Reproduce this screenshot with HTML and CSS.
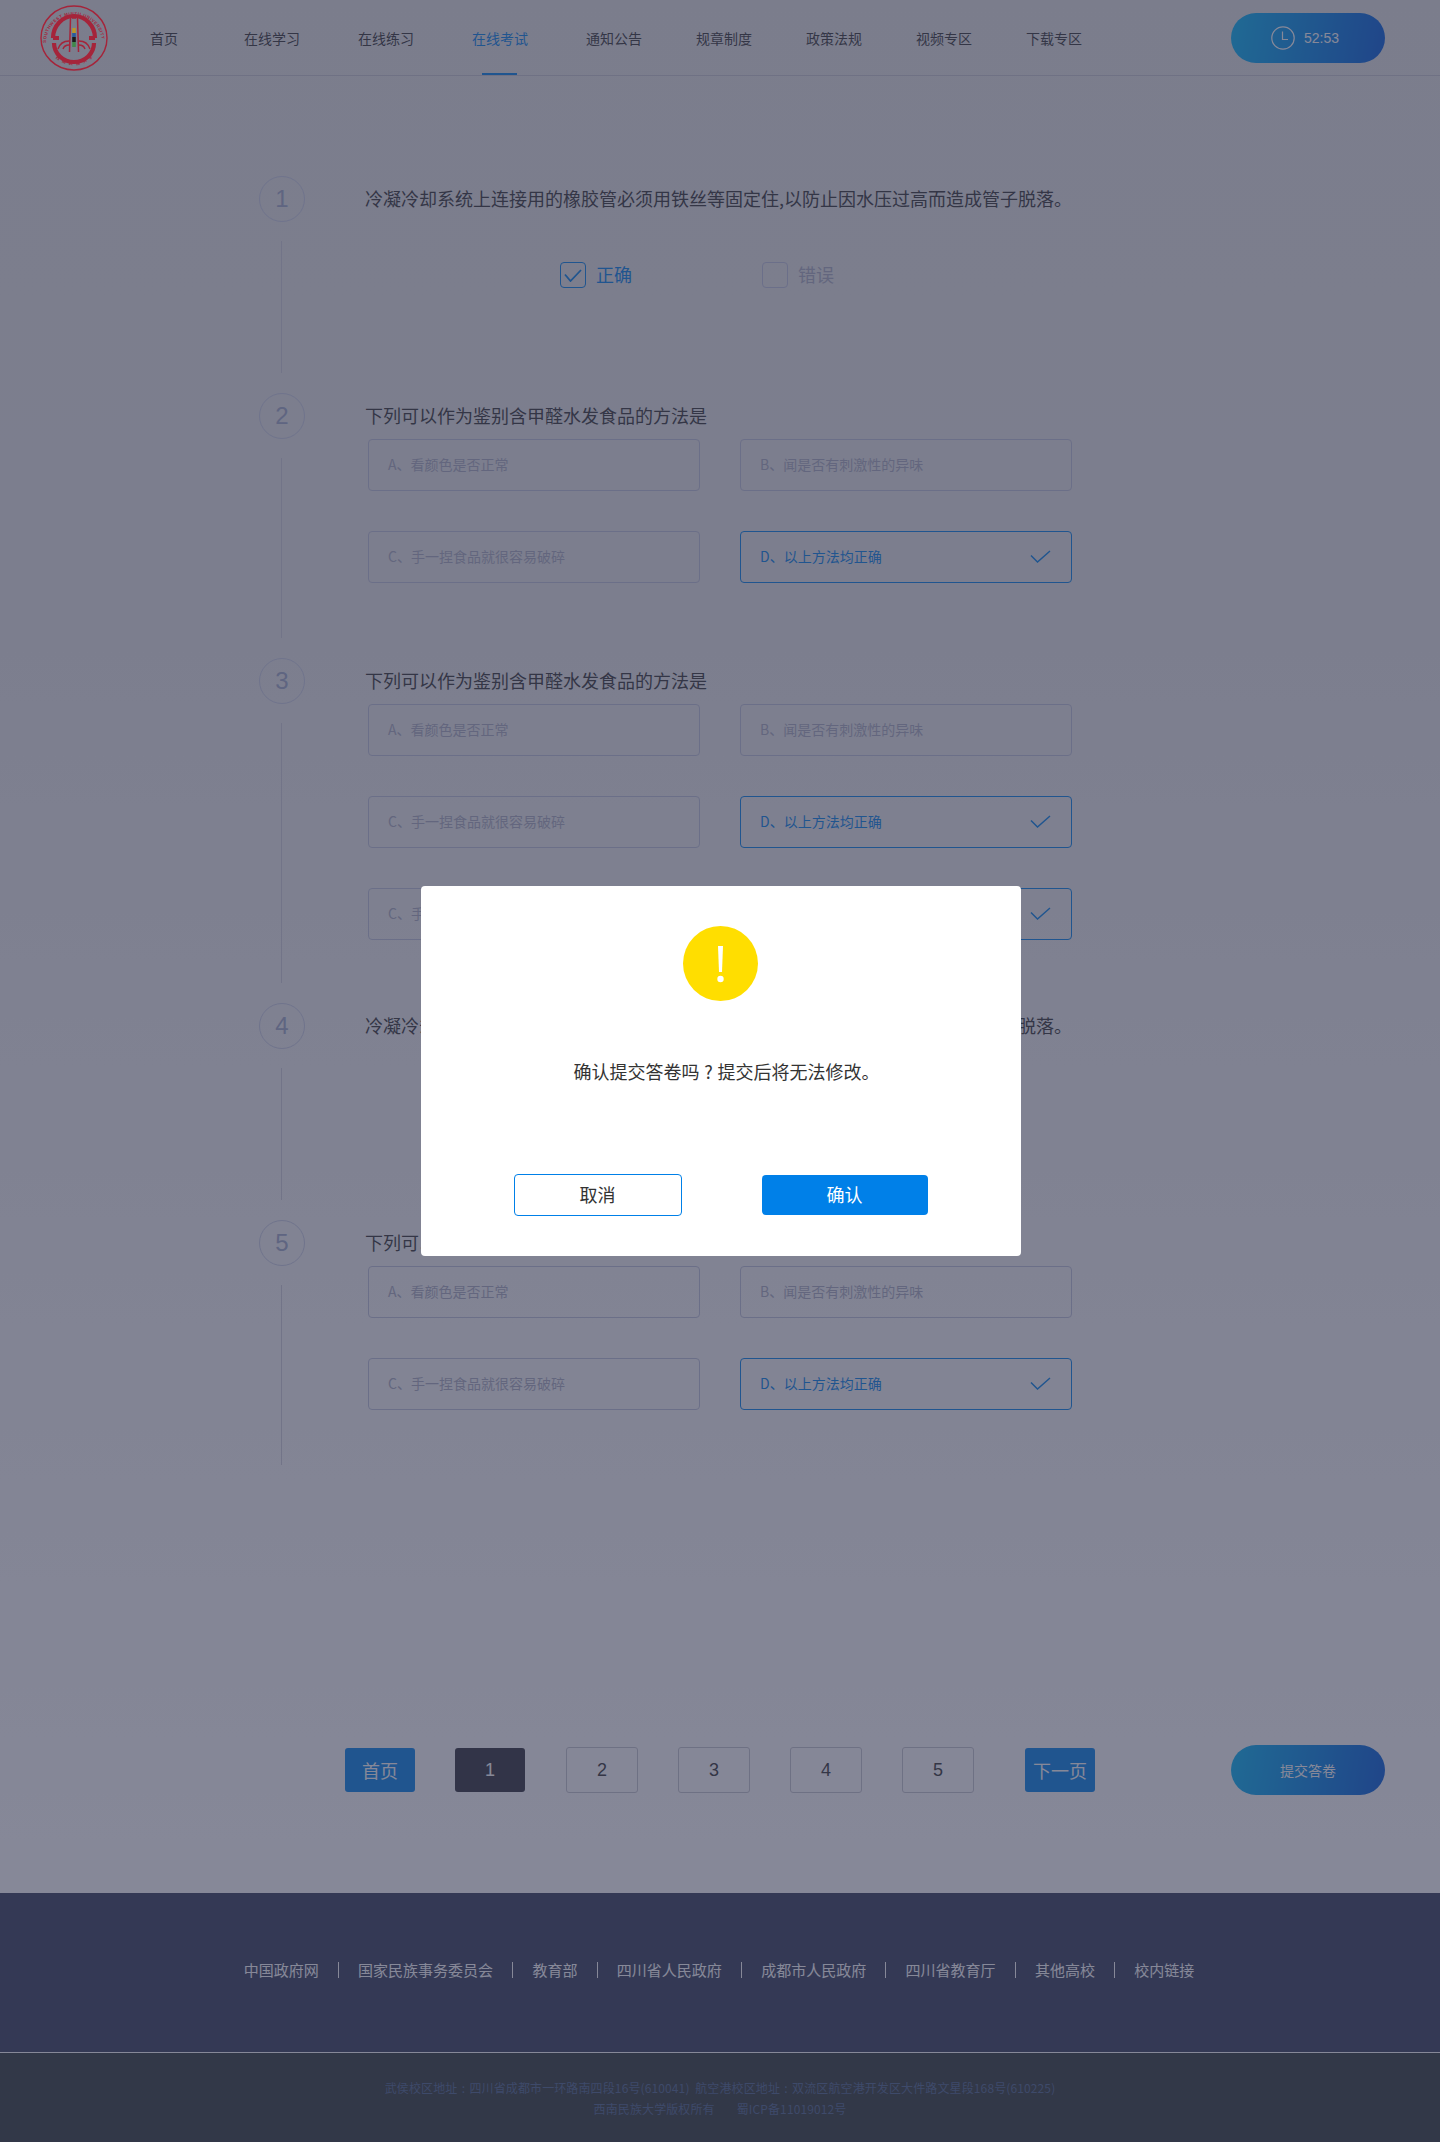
FILE: index.html
```html
<!DOCTYPE html>
<html lang="zh-CN">
<head>
  <meta charset="UTF-8" />
  <title>在线考试</title>
  <link rel="stylesheet" href="styles.css">
</head>
<body>
  <div class="page">
    <header class="header">
      <svg class="logo" width="68" height="66" viewBox="0 0 68 66">
        <defs>
          <path id="logo-top" d="M6 38 A28 28 0 0 1 62 38" />
          <path id="logo-bottom" d="M13 50 A27 27 0 0 0 55 50" />
        </defs>
        <ellipse cx="34" cy="33" rx="33" ry="32" fill="none" stroke="#a5243a" stroke-width="1.4" />
        <text class="logo-text" font-size="4.4"><textPath href="#logo-top" textLength="84">SOUTHWEST MINZU UNIVERSITY</textPath></text>
        <text class="logo-text" font-size="4.2" letter-spacing="3.2"><textPath href="#logo-bottom" startOffset="4">西南民族大学</textPath></text>
        <path d="M13 33 A21 22 0 0 1 55 33 M19 33 H13 M49 33 H55" fill="none" stroke="#a5243a" stroke-width="4.2" />
        <path d="M14 38 A20 19 0 0 0 54 38" fill="none" stroke="#a5243a" stroke-width="4.2" />
        <path d="M30.5 13 L29.5 47 M37.5 13 L38.5 47 M32 13 H36" stroke="#a5243a" stroke-width="1.5" fill="none" />
        <rect x="32.2" y="23" width="3.6" height="5" fill="#b8962b" />
        <rect x="32.2" y="28" width="3.6" height="4" fill="#2b5c9e" />
        <rect x="32.2" y="32" width="3.6" height="5" fill="#1b1b1b" />
        <rect x="32.2" y="37" width="3.6" height="5" fill="#3f8a4a" />
        <path d="M18 44 C20 38 25 36 29 36 M50 44 C48 38 43 36 39 36 M23 44 C24 41 27 40 29 40 M45 44 C44 41 41 40 39 40" fill="none" stroke="#a5243a" stroke-width="1.4" />
      </svg>
      <nav class="nav">
        <a class="nav-item nav-item-first">首页</a>
        <a class="nav-item nav-item-wide">在线学习</a>
        <a class="nav-item nav-item-wide">在线练习</a>
        <a class="nav-item nav-item-wide active">在线考试</a>
        <a class="nav-item">通知公告</a>
        <a class="nav-item">规章制度</a>
        <a class="nav-item">政策法规</a>
        <a class="nav-item">视频专区</a>
        <a class="nav-item">下载专区</a>
      </nav>
      <div class="timer">
        <svg width="24" height="24" viewBox="0 0 24 24" fill="none" stroke="#fff" stroke-width="1.2">
          <circle cx="12" cy="12" r="11.2" />
          <path d="M11.5 5.5 V13.5 H17" />
        </svg>
        <span>52:53</span>
      </div>
    </header>

    <main class="questions">
      <section class="question question-short">
        <div class="q-side"><div class="q-num">1</div><div class="q-line"></div></div>
        <div class="q-body">
          <h3 class="q-title">冷凝冷却系统上连接用的橡胶管必须用铁丝等固定住,以防止因水压过高而造成管子脱落。</h3>
          <div class="judge">
            <div class="judge-item selected">
              <span class="judge-box"><svg width="18" height="13" viewBox="0 0 18 13" fill="none"><path d="M1 5.5 L6.5 12 L17 1" /></svg></span><span class="judge-label">正确</span>
            </div>
            <div class="judge-item"><span class="judge-box"></span><span class="judge-label">错误</span></div>
          </div>
        </div>
      </section>

      <section class="question question-two">
        <div class="q-side"><div class="q-num">2</div><div class="q-line"></div></div>
        <div class="q-body">
          <h3 class="q-title">下列可以作为鉴别含甲醛水发食品的方法是</h3>
          <div class="options">
            <div class="option">A、看颜色是否正常</div>
            <div class="option">B、闻是否有刺激性的异味</div>
            <div class="option">C、手一捏食品就很容易破碎</div>
            <div class="option selected">D、以上方法均正确<svg class="option-check" width="21" height="13" viewBox="0 0 21 13" fill="none"><path d="M1 5.5 L7.5 12 L20 1" /></svg></div>
          </div>
        </div>
      </section>

      <section class="question question-three">
        <div class="q-side"><div class="q-num">3</div><div class="q-line"></div></div>
        <div class="q-body">
          <h3 class="q-title">下列可以作为鉴别含甲醛水发食品的方法是</h3>
          <div class="options">
            <div class="option">A、看颜色是否正常</div>
            <div class="option">B、闻是否有刺激性的异味</div>
            <div class="option">C、手一捏食品就很容易破碎</div>
            <div class="option selected">D、以上方法均正确<svg class="option-check" width="21" height="13" viewBox="0 0 21 13" fill="none"><path d="M1 5.5 L7.5 12 L20 1" /></svg></div>
            <div class="option">C、手一捏食品就很容易破碎</div>
            <div class="option selected">D、以上方法均正确<svg class="option-check" width="21" height="13" viewBox="0 0 21 13" fill="none"><path d="M1 5.5 L7.5 12 L20 1" /></svg></div>
          </div>
        </div>
      </section>

      <section class="question question-short">
        <div class="q-side"><div class="q-num">4</div><div class="q-line"></div></div>
        <div class="q-body">
          <h3 class="q-title">冷凝冷却系统上连接用的橡胶管必须用铁丝等固定住,以防止因水压过高而造成管子脱落。</h3>
          <div class="judge">
            <div class="judge-item selected">
              <span class="judge-box"><svg width="18" height="13" viewBox="0 0 18 13" fill="none"><path d="M1 5.5 L6.5 12 L17 1" /></svg></span><span class="judge-label">正确</span>
            </div>
            <div class="judge-item"><span class="judge-box"></span><span class="judge-label">错误</span></div>
          </div>
        </div>
      </section>

      <section class="question question-two">
        <div class="q-side"><div class="q-num">5</div><div class="q-line"></div></div>
        <div class="q-body">
          <h3 class="q-title">下列可以作为鉴别含甲醛水发食品的方法是</h3>
          <div class="options">
            <div class="option">A、看颜色是否正常</div>
            <div class="option">B、闻是否有刺激性的异味</div>
            <div class="option">C、手一捏食品就很容易破碎</div>
            <div class="option selected">D、以上方法均正确<svg class="option-check" width="21" height="13" viewBox="0 0 21 13" fill="none"><path d="M1 5.5 L7.5 12 L20 1" /></svg></div>
          </div>
        </div>
      </section>
    </main>

    <div class="pager">
      <a class="page-btn">首页</a>
      <a class="page-num current">1</a>
      <a class="page-num">2</a>
      <a class="page-num">3</a>
      <a class="page-num">4</a>
      <a class="page-num">5</a>
      <a class="page-btn page-next">下一页</a>
      <a class="submit">提交答卷</a>
    </div>

    <footer class="footer">
      <div class="footer-links">
        <a>中国政府网</a><i></i>
        <a>国家民族事务委员会</a><i></i>
        <a>教育部</a><i></i>
        <a>四川省人民政府</a><i></i>
        <a>成都市人民政府</a><i></i>
        <a>四川省教育厅</a><i></i>
        <a>其他高校</a><i></i>
        <a>校内链接</a>
      </div>
      <div class="footer-info">
        <p>武侯校区地址<span class="mid-mark">:</span>四川省成都市一环路南四段16号(610041) &nbsp;航空港校区地址<span class="mid-mark">:</span>双流区航空港开发区大件路文星段168号(610225)</p>
        <p>西南民族大学版权所有<span class="icp">蜀ICP备11019012号</span></p>
      </div>
    </footer>

    <div class="mask"></div>

    <div class="modal">
      <svg class="modal-icon" width="75" height="75" viewBox="0 0 75 75">
        <circle cx="37.5" cy="37.5" r="37.5" fill="#ffde00" />
        <path d="M35 20 H40 L39 46 H36 Z" fill="#fff" />
        <circle cx="37.5" cy="53" r="3.2" fill="#fff" />
      </svg>
      <p class="modal-text">确认提交答卷吗<span class="mid-mark">?</span>提交后将无法修改。</p>
      <div class="modal-btns">
        <button class="btn-cancel">取消</button>
        <button class="btn-ok">确认</button>
      </div>
    </div>
  </div>
</body>
</html>
```

FILE: styles.css
```css
* {
  box-sizing: border-box;
}

body {
  margin: 0;
  font-family: "Noto Sans CJK JP", "Noto Sans CJK SC", sans-serif;
  color: #333;
}

.page {
  position: relative;
  width: 1440px;
  height: 2142px;
  overflow: hidden;
  background: linear-gradient(#e4e4e2 0, #e6e6e6 600px, #fff 1893px);
}

/* header */
.header {
  display: flex;
  align-items: flex-start;
  height: 76px;
  padding: 5px 55px 0 40px;
  border-bottom: 1px solid #c6c6cc;
}

.logo {
  position: relative;
  z-index: 5;
  flex-shrink: 0;
}

.logo-text {
  fill: #a5243a;
  font-family: "Liberation Sans", "Noto Sans CJK SC", sans-serif;
  font-weight: bold;
}

.nav {
  display: flex;
  margin: -5px 0 0 42px;
}

.nav-item {
  position: relative;
  display: block;
  width: 110px;
  height: 75px;
  font-size: 14px;
  line-height: 76px;
}

.nav-item-first {
  width: 94px;
}

.nav-item-wide {
  width: 114px;
}

.nav-item.active {
  color: #0080e8;
}

.nav-item.active::after {
  content: "";
  position: absolute;
  left: 10px;
  bottom: 0;
  width: 35px;
  height: 2px;
  background: #0080e8;
}

.timer {
  display: flex;
  align-items: center;
  gap: 9px;
  width: 154px;
  height: 50px;
  margin: 8px 0 0 auto;
  padding-left: 40px;
  border-radius: 25px;
  background: linear-gradient(100deg, #00b4f5, #0058d8);
  color: #fff;
  font-family: "Liberation Sans", sans-serif;
  font-size: 14px;
}

/* questions */
.questions {
  padding: 100px 0 0 259px;
}

.question {
  display: flex;
}

.question-short {
  height: 217px;
}

.question-two {
  height: 265px;
}

.question-three {
  height: 345px;
}

.q-side {
  display: flex;
  flex-direction: column;
  align-items: center;
  width: 46px;
  padding-bottom: 20px;
}

.q-num {
  flex-shrink: 0;
  width: 46px;
  height: 46px;
  border: 1px solid #c6cbe0;
  border-radius: 50%;
  color: #9da7c5;
  font-family: "Liberation Sans", sans-serif;
  font-size: 24px;
  line-height: 44px;
  text-align: center;
}

.q-line {
  flex: 1;
  width: 1px;
  margin: 19px 1px 0 0;
  background: #ccced6;
}

.q-body {
  margin-left: 60px;
}

.q-title {
  height: 46px;
  margin: 0;
  font-size: 18px;
  font-weight: normal;
  line-height: 44px;
  white-space: nowrap;
}

.judge {
  display: flex;
  gap: 130px;
  margin: 40px 0 0 195px;
}

.judge-item {
  display: flex;
  align-items: center;
  gap: 10px;
  height: 26px;
  color: #a8abbd;
  font-size: 18px;
}

.judge-label {
  margin-top: -2px;
}

.judge-box {
  display: flex;
  align-items: center;
  justify-content: center;
  width: 26px;
  height: 26px;
  border: 1px solid #bcc1da;
  border-radius: 4px;
}

.judge-item.selected {
  color: #0080e8;
}

.judge-item.selected .judge-box {
  border-color: #0080e8;
}

.judge-box path {
  stroke: #0080e8;
  stroke-width: 1.8;
}

.option-check path {
  stroke: #0080e8;
  stroke-width: 1.5;
}

.options {
  display: grid;
  grid-template-columns: 332px 332px;
  gap: 40px;
  margin-left: 3px;
}

.option {
  display: flex;
  align-items: center;
  justify-content: space-between;
  height: 52px;
  padding: 0 20px 2px 19px;
  border: 1px solid #bcc1d6;
  border-radius: 4px;
  color: #a8abbd;
  font-size: 14px;
}

.option.selected {
  border-color: #0080e8;
  color: #0080e8;
}

/* pager */
.pager {
  display: flex;
  align-items: center;
  gap: 40px;
  height: 50px;
  margin-top: 260px;
  padding-left: 345px;
}

.page-btn {
  width: 70px;
  height: 44px;
  border-radius: 3px;
  background: #0080e8;
  color: #fff;
  font-size: 18px;
  line-height: 44px;
  text-align: center;
  white-space: nowrap;
}

.page-num {
  width: 72px;
  height: 46px;
  border: 1px solid #c4c5cc;
  border-radius: 3px;
  font-family: "Liberation Sans", sans-serif;
  font-size: 18px;
  line-height: 44px;
  text-align: center;
}

.page-num.current {
  width: 70px;
  height: 44px;
  margin-right: 1px;
  border: 0;
  background: #2d2f39;
  color: #fff;
  line-height: 44px;
}

.page-next {
  margin-left: 11px;
}

.submit {
  width: 154px;
  height: 50px;
  margin-left: 96px;
  border-radius: 25px;
  background: linear-gradient(100deg, #00b4f5, #0058d8);
  color: #fff;
  font-size: 14px;
  line-height: 50px;
  text-align: center;
}

/* footer */
.footer {
  height: 249px;
  margin-top: 98px;
  background: #2f3739;
}

.footer-links {
  display: flex;
  align-items: center;
  justify-content: center;
  gap: 19.2px;
  height: 160px;
  padding: 0 2px 6px 0;
  border-bottom: 1px solid #fff;
  background: #323a58;
  color: #fff;
  font-size: 15px;
}

.footer-links i {
  width: 1px;
  height: 16px;
  background: #fff;
}

.footer-info {
  padding-top: 24px;
  color: #4b648c;
  font-size: 12px;
  line-height: 21px;
  letter-spacing: 0.12px;
  text-align: center;
}

.footer-info p {
  margin: 0;
}

.footer-info .mid-mark {
  width: 12px;
}

.icp {
  margin-left: 22px;
}

/* fullwidth ? and : sit centred in their cell in the original */
.mid-mark {
  display: inline-block;
  width: 18px;
  text-align: center;
}

/* dialog */
.mask {
  position: absolute;
  inset: 0;
  z-index: 2;
  background: rgba(53, 57, 83, 0.6);
}

.modal {
  position: absolute;
  left: 421px;
  top: 886px;
  z-index: 3;
  display: flex;
  flex-direction: column;
  align-items: center;
  width: 600px;
  height: 370px;
  padding-top: 40px;
  border-radius: 4px;
  background: #fff;
}

.modal-icon {
  margin-left: -2px;
}

.modal-text {
  margin: 55px 0 0 11px;
  font-size: 18px;
  line-height: 30px;
}

.modal-btns {
  display: flex;
  align-items: center;
  gap: 80px;
  margin: 88px 0 0 -1px;
}

.modal-btns button {
  padding: 0 0 2px;
  font-family: inherit;
  font-size: 18px;
  border-radius: 4px;
}

.btn-cancel {
  width: 168px;
  height: 42px;
  border: 1px solid #0080e8;
  background: #fff;
  color: #333;
}

.btn-ok {
  width: 166px;
  height: 40px;
  border: 0;
  background: #0080e8;
  color: #fff;
}
```
